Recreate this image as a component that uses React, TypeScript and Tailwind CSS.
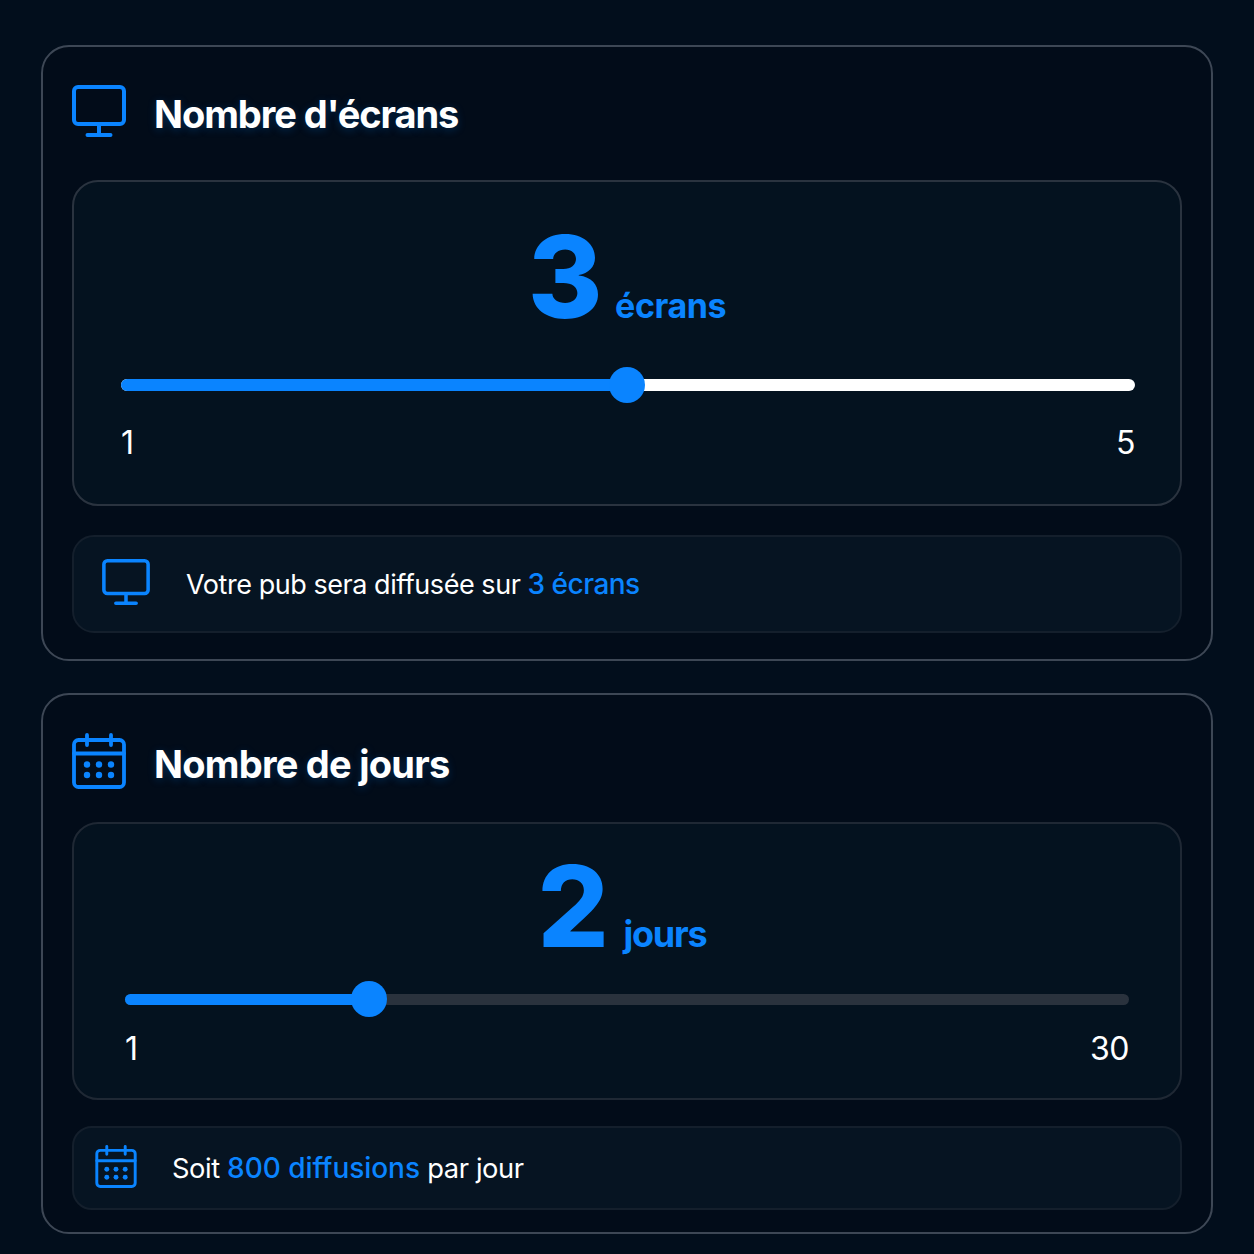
const font = { fontFamily: "Inter, 'Liberation Sans', sans-serif" };

function MonitorIcon({ className }: { className: string }) {
  return (
    <svg viewBox="0 0 54 52" fill="none" className={className}>
      <rect x="2" y="2" width="50" height="37" rx="4" stroke="#0a84ff" strokeWidth="4" />
      <path d="M27 41v9M15.5 50h23" stroke="#0a84ff" strokeWidth="4" strokeLinecap="round" />
    </svg>
  );
}

function CalendarIcon({ className }: { className: string }) {
  return (
    <svg viewBox="0 0 54 56" fill="none" className={className}>
      <rect x="2" y="7" width="50" height="47" rx="4.5" stroke="#0a84ff" strokeWidth="3.8" />
      <path d="M2 20.5h50M15 2v10M39 2v10" stroke="#0a84ff" strokeWidth="3.8" strokeLinecap="round" />
      <g fill="#0a84ff">
        <circle cx="15" cy="31.5" r="3.2" />
        <circle cx="27" cy="31.5" r="3.2" />
        <circle cx="39" cy="31.5" r="3.2" />
        <circle cx="15" cy="42" r="3.2" />
        <circle cx="27" cy="42" r="3.2" />
        <circle cx="39" cy="42" r="3.2" />
      </g>
    </svg>
  );
}

export default function App() {
  return (
    <div style={font} className="w-[1254px] h-[1254px] overflow-hidden bg-[#020e1c] px-[41px] pt-[45px] flex flex-col gap-[32px]">
      <section className="h-[616px] rounded-[28px] border-2 border-[#3d4755] bg-[#020c19] px-[29px] pt-[38px] flex flex-col">
        <div className="h-[52px] flex items-center gap-[28px]">
          <MonitorIcon className="w-[54px] h-[52px] shrink-0" />
          <h2 className="mt-[6px] text-[38px] font-[650] tracking-[-1.05px] text-white [text-shadow:0_2px_8px_rgba(10,132,255,0.25)]">Nombre d'écrans</h2>
        </div>
        <div className="mt-[43px] h-[326px] rounded-[26px] border-2 border-[#2a333f] bg-[#04121f] pl-[47px] pr-[45px] flex flex-col">
          <div className="h-[168px] flex items-baseline justify-center pt-[38px] pr-[2px] gap-[14px] text-[#0a84ff]">
            <span className="text-[114px] font-extrabold tracking-[-1.5px] leading-[114px]">3</span>
            <span className="text-[34px] font-[650] tracking-[-0.4px]">écrans</span>
          </div>
          <div className="relative h-[12px] mt-[29px] rounded-full bg-white">
            <div className="h-full w-[506px] rounded-full bg-[#0a84ff]" />
            <div className="absolute left-[488px] top-[-12px] w-[36px] h-[36px] rounded-full bg-[#0a84ff]" />
          </div>
          <div className="mt-[32px] flex justify-between text-[32px] leading-[40px] tracking-[-0.5px] text-white">
            <span>1</span>
            <span>5</span>
          </div>
        </div>
        <div className="mt-[29px] h-[98px] rounded-[22px] border-2 border-[#141f2c] bg-[#061422] pl-[28px] flex items-center gap-[36px]">
          <MonitorIcon className="mb-[4px] w-[48px] h-[46px] shrink-0" />
          <p className="text-[27px] tracking-[-0.45px] text-white">
            Votre pub sera diffusée sur <span className="text-[28px] font-medium tracking-[-0.5px] text-[#0a84ff]">3 écrans</span>
          </p>
        </div>
      </section>

      <section className="h-[541px] rounded-[28px] border-2 border-[#3d4755] bg-[#020c19] px-[29px] pt-[38px] flex flex-col">
        <div className="h-[56px] flex items-center gap-[28px]">
          <CalendarIcon className="w-[54px] h-[56px] shrink-0" />
          <h2 className="mt-[6px] text-[38px] font-[650] tracking-[-0.75px] text-white [text-shadow:0_2px_8px_rgba(10,132,255,0.25)]">Nombre de jours</h2>
        </div>
        <div className="mt-[33px] h-[278px] rounded-[26px] border-2 border-[#1f2834] bg-[#04121f] px-[51px] flex flex-col">
          <div className="h-[138px] flex items-baseline justify-center pt-[27px] pr-[10px] gap-[16px] text-[#0a84ff]">
            <span className="text-[112px] font-extrabold tracking-[-1.5px] leading-[110px]">2</span>
            <span className="text-[36px] font-[650] tracking-[-1.2px]">jours</span>
          </div>
          <div className="relative h-[11px] mt-[32px] rounded-full bg-[#2a323d]">
            <div className="h-full w-[244px] rounded-full bg-[#0a84ff]" />
            <div className="absolute left-[226px] top-[-13px] w-[36px] h-[36px] rounded-full bg-[#0a84ff]" />
          </div>
          <div className="mt-[24px] flex justify-between text-[32px] leading-[40px] tracking-[-0.5px] text-white">
            <span>1</span>
            <span>30</span>
          </div>
        </div>
        <div className="mt-[26px] h-[84px] rounded-[20px] border-2 border-[#141f2c] bg-[#061422] pl-[21px] flex items-center gap-[35px]">
          <CalendarIcon className="mb-[4px] w-[42px] h-[43px] shrink-0" />
          <p className="text-[27.3px] tracking-[-0.4px] text-white">
            Soit <span className="text-[28px] font-medium tracking-[-0.05px] text-[#0a84ff]">800 diffusions</span> par jour
          </p>
        </div>
      </section>
    </div>
  );
}
